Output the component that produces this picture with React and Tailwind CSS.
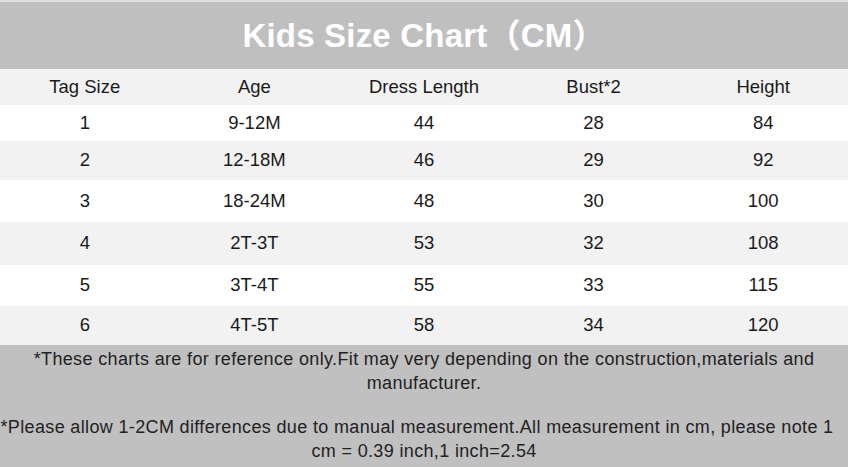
const COLUMNS = ['Tag Size', 'Age', 'Dress Length', 'Bust*2', 'Height'];

const ROWS = [
  { cells: ['1', '9-12M', '44', '28', '84'], h: 'h-[36px]', bg: 'bg-white' },
  { cells: ['2', '12-18M', '46', '29', '92'], h: 'h-[39px]', bg: 'bg-[#f2f2f2]' },
  { cells: ['3', '18-24M', '48', '30', '100'], h: 'h-[42px]', bg: 'bg-white' },
  { cells: ['4', '2T-3T', '53', '32', '108'], h: 'h-[43px]', bg: 'bg-[#f2f2f2]' },
  { cells: ['5', '3T-4T', '55', '33', '115'], h: 'h-[41px]', bg: 'bg-white' },
  { cells: ['6', '4T-5T', '58', '34', '120'], h: 'h-[39px]', bg: 'bg-[#f2f2f2]' },
];

function Row({ cells, className }) {
  return (
    <div className={`grid grid-cols-5 items-center ${className}`}>
      {cells.map((c, i) => (
        <div key={i} className="text-center">{c}</div>
      ))}
    </div>
  );
}

export default function App() {
  return (
    <div
      className="w-[850px] h-[467px] overflow-hidden bg-white pr-[2px] text-[#1a1a1a] flex flex-col"
      style={{ fontFamily: '"Liberation Sans", Arial, "Noto Sans CJK SC", sans-serif' }}
    >
      {/* Title */}
      <div className="h-[69px] shrink-0 border-t-2 border-[#dedede] bg-[#bfbfbf] flex items-center justify-center">
        <h1 className="text-[33px] font-bold text-white leading-none tracking-[0.2px]">Kids Size Chart（CM）</h1>
      </div>

      {/* Table */}
      <div className="text-[18.5px] leading-none shrink-0">
        <Row cells={COLUMNS} className="h-[36px] bg-[#f2f2f2]" />
        {ROWS.map((r, i) => (
          <Row key={i} cells={r.cells} className={`${r.h} ${r.bg}`} />
        ))}
      </div>

      {/* Notes */}
      <div className="flex-1 bg-[#c0c0c0] text-center text-[18px] leading-[24px] text-[#222] tracking-[0.35px] pt-[2px] whitespace-nowrap">
        <p>*These charts are for reference only.Fit may very depending on the construction,materials and</p>
        <p>manufacturer.</p>
        <p className="mt-[20px] pr-[14px]">
          *Please allow 1-2CM differences due to manual measurement.All measurement in cm, please note 1
        </p>
        <p>cm = 0.39 inch,1 inch=2.54</p>
      </div>
    </div>
  );
}
